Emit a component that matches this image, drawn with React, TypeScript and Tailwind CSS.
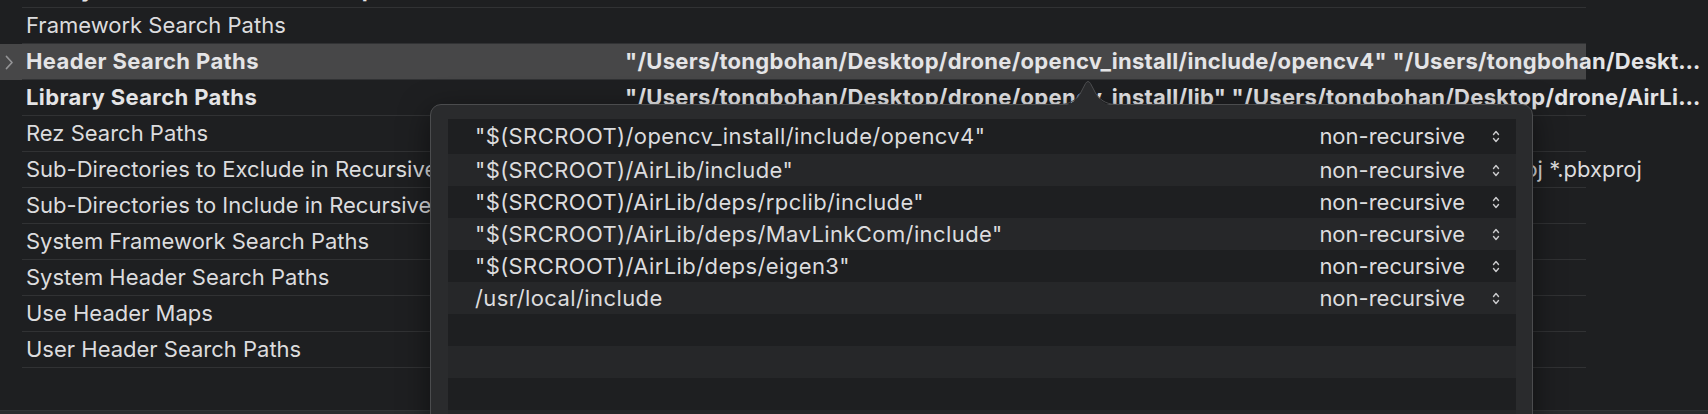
import React from "react";

const FONT = { fontFamily: 'Inter, "Noto Sans", sans-serif' };

type Row = { label: string; value?: string; bold?: boolean; selected?: boolean };

const rows: Row[] = [
  { label: "Always Search User Paths (Deprecated)", bold: true, value: "No" },
  { label: "Framework Search Paths" },
  {
    label: "Header Search Paths",
    bold: true,
    selected: true,
    value:
      '"/Users/tongbohan/Desktop/drone/opencv_install/include/opencv4" "/Users/tongbohan/Desktop/drone/AirLib/include" "/Users/tongbohan/Desktop/drone/AirLib/deps/rpclib/include"',
  },
  {
    label: "Library Search Paths",
    bold: true,
    value:
      '"/Users/tongbohan/Desktop/drone/opencv_install/lib" "/Users/tongbohan/Desktop/drone/AirLib/lib" "/Users/tongbohan/Desktop/drone/AirLib/deps"',
  },
  { label: "Rez Search Paths" },
  {
    label: "Sub-Directories to Exclude in Recursive Searches",
    value: "*.nib *.lproj *.framework *.gch *.xcode* *.xcassets (*) .DS_Store CVS .svn .git .hg *.pbproj *.pbxproj",
  },
  { label: "Sub-Directories to Include in Recursive Searches" },
  { label: "System Framework Search Paths" },
  { label: "System Header Search Paths" },
  { label: "Use Header Maps" },
  { label: "User Header Search Paths" },
];

const paths = [
  '"$(SRCROOT)/opencv_install/include/opencv4"',
  '"$(SRCROOT)/AirLib/include"',
  '"$(SRCROOT)/AirLib/deps/rpclib/include"',
  '"$(SRCROOT)/AirLib/deps/MavLinkCom/include"',
  '"$(SRCROOT)/AirLib/deps/eigen3"',
  "/usr/local/include",
];

function UpDown() {
  return (
    <svg width="10" height="15" viewBox="0 0 10 15" fill="none" stroke="#c9c9cb" strokeWidth="1.4" strokeLinecap="round" strokeLinejoin="round">
      <path d="M2.5 5.5 L5 2.5 L7.5 5.5" />
      <path d="M2.5 9.5 L5 12.5 L7.5 9.5" />
    </svg>
  );
}

function Chevron() {
  return (
    <svg width="9" height="15" viewBox="0 0 9 15" fill="none" stroke="#949496" strokeWidth="1.7" strokeLinecap="round" strokeLinejoin="round">
      <path d="M1.5 1.5 L7 7.5 L1.5 13.5" />
    </svg>
  );
}

export default function App() {
  return (
    <div className="w-[1708px] h-[414px] bg-[#1e1f21] relative overflow-hidden flex flex-col" style={FONT}>
      <div className="flex flex-col mt-[-28px]">
        {rows.map((r, i) => (
          <div key={i} className={`h-[36px] w-[1586px] flex ${r.selected ? "bg-[#474748]" : ""}`}>
            <div className="w-[22px] shrink-0 flex items-center pl-[5px]">
              {r.selected ? <Chevron /> : null}
            </div>
            <div className="flex-1 flex items-center border-b border-[#313234] min-w-0">
              <div
                className={`w-[603px] shrink-0 pl-[4px] whitespace-nowrap overflow-hidden text-[22px] ${
                  r.bold ? "font-bold tracking-[0.4px] text-[#e4e4e6]" : "text-[#dcdcde]"
                }`}
              >
                {r.label}
              </div>
              {r.value ? (
                <div
                  className={`w-[1082px] shrink-0 whitespace-nowrap overflow-hidden text-ellipsis text-[22px] ${
                    r.bold ? "font-bold tracking-[0.3px] text-[#e4e4e6]" : "text-[#dcdcde]"
                  }`}
                >
                  {r.value}
                </div>
              ) : null}
            </div>
          </div>
        ))}
      </div>
      <div className="flex-1" />
      <div className="h-[4px] bg-[#2a2b2d] border-t border-[#333436]" />

      {/* Popover */}
      <div className="absolute left-[430px] top-[104px] w-[1103px] h-[340px] rounded-[11px] bg-[#2a2b2d] border border-[#4b4c4e] shadow-[0_8px_30px_rgba(0,0,0,0.5)] pl-[17px] pr-[16px] pt-[14px]">
        <div className="flex flex-col">
          {Array.from({ length: 10 }).map((_, i) => (
            <div
              key={i}
              className={`${i === 0 ? "h-[35px]" : "h-[32px]"} flex items-center ${
                i % 2 === 0 ? "bg-[#1e1f21]" : "bg-[#262729]"
              }`}
            >
              {i < paths.length ? (
                <>
                  <div className="flex-1 pl-[27px] text-[22px] tracking-[0.4px] text-[#dcdcde] whitespace-nowrap">{paths[i]}</div>
                  <div className="text-[22px] text-[#dcdcde] whitespace-nowrap">non-recursive</div>
                  <div className="w-[51px] flex justify-end pr-[15px]">
                    <UpDown />
                  </div>
                </>
              ) : null}
            </div>
          ))}
        </div>
      </div>
      {/* Arrow */}
      <svg className="absolute left-[1058px] top-[79px]" width="60" height="27" viewBox="0 0 60 27">
        <path d="M0 27 C10 27 16 24 22 15 L27.5 4.5 Q30 0.5 32.5 4.5 L38 15 C44 24 50 27 60 27 Z" fill="#2a2b2d" />
        <path d="M0 25.5 C10 25.5 16 23 22 15 L27.5 4.5 Q30 0.5 32.5 4.5 L38 15 C44 23 50 25.5 60 25.5" fill="none" stroke="#4b4c4e" strokeWidth="1" />
      </svg>
    </div>
  );
}
